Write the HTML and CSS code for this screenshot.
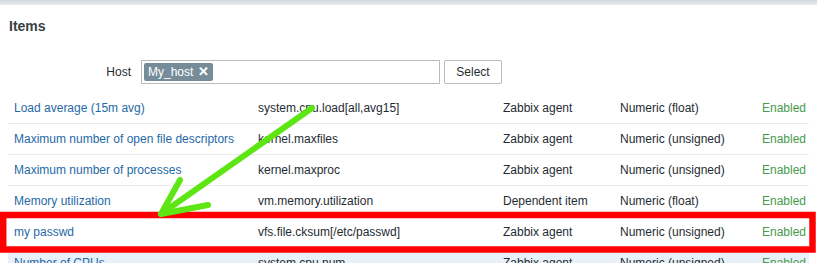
FILE: index.html
```html
<!DOCTYPE html>
<html lang="en">
<head>
  <meta charset="UTF-8">
  <title>Items</title>
  <link rel="stylesheet" href="styles.css">
</head>
<body>
  <div class="topbar"></div>
  <div class="container">
    <h1 class="title">Items</h1>
    <div class="form-row">
      <label class="form-label">Host</label>
      <div class="multiselect">
        <span class="chip">My_host <span class="chip-x">&#x2715;</span></span>
      </div>
      <button class="btn">Select</button>
    </div>
    <table class="items">
      <colgroup>
        <col style="width:244px">
        <col style="width:245px">
        <col style="width:117px">
        <col style="width:142px">
        <col>
      </colgroup>
      <tbody>
        <tr>
          <td><a href="#">Load average (15m avg)</a></td>
          <td>system.cpu.load[all,avg15]</td>
          <td>Zabbix agent</td>
          <td>Numeric (float)</td>
          <td class="status">Enabled</td>
        </tr>
        <tr>
          <td><a href="#">Maximum number of open file descriptors</a></td>
          <td>kernel.maxfiles</td>
          <td>Zabbix agent</td>
          <td>Numeric (unsigned)</td>
          <td class="status">Enabled</td>
        </tr>
        <tr>
          <td><a href="#">Maximum number of processes</a></td>
          <td>kernel.maxproc</td>
          <td>Zabbix agent</td>
          <td>Numeric (unsigned)</td>
          <td class="status">Enabled</td>
        </tr>
        <tr>
          <td><a href="#">Memory utilization</a></td>
          <td>vm.memory.utilization</td>
          <td>Dependent item</td>
          <td>Numeric (float)</td>
          <td class="status">Enabled</td>
        </tr>
        <tr>
          <td><a href="#">my passwd</a></td>
          <td>vfs.file.cksum[/etc/passwd]</td>
          <td>Zabbix agent</td>
          <td>Numeric (unsigned)</td>
          <td class="status">Enabled</td>
        </tr>
        <tr class="hover">
          <td><a href="#">Number of CPUs</a></td>
          <td>system.cpu.num</td>
          <td>Zabbix agent</td>
          <td>Numeric (unsigned)</td>
          <td class="status">Enabled</td>
        </tr>
      </tbody>
    </table>
  </div>

  <!-- annotation drawn over the screenshot -->
  <svg class="markup" width="817" height="263" viewBox="0 0 817 263">
    <rect x="3.2" y="215" width="809.3" height="34.5" fill="none" stroke="#ff0000" stroke-width="6.5"/>
    <g stroke="#5ee614" stroke-width="6" stroke-linecap="round" fill="none">
      <line x1="312" y1="108" x2="161" y2="214"/>
      <line x1="161" y1="214" x2="180" y2="180"/>
      <line x1="161" y1="214" x2="208" y2="205"/>
    </g>
  </svg>
</body>
</html>
```

FILE: styles.css
```css
body {
  font-family: "Liberation Sans", Arial, sans-serif;
  font-size: 12px;
  color: #1f2c33;
  background-color: #fff;
  margin: 0;
  padding: 0;
  overflow: hidden;
}
.topbar {
  height: 5px;
  background: linear-gradient(to bottom, #d3d7da, #e9ecee);
}
.container {
  padding: 0 8px;
}
.title {
  font-size: 14px;
  font-weight: bold;
  color: #384045;
  margin: 0;
  padding: 13px 1px 0;
  height: 42px;
  box-sizing: border-box;
}
.form-row {
  display: flex;
  align-items: center;
  gap: 4px;
  margin-top: 13px;
  height: 24px;
}
.form-label {
  width: 123px;
  text-align: right;
  margin-right: 6px;
  color: #1f2c33;
}
.multiselect {
  width: 299px;
  height: 24px;
  box-sizing: border-box;
  border: 1px solid #b8bcbf;
  display: flex;
  align-items: center;
  padding-left: 2px;
}
.chip {
  background-color: #768d99;
  color: #fff;
  height: 18px;
  line-height: 18px;
  padding: 0 4px;
  border-radius: 2px;
  white-space: nowrap;
}
.chip-x {
  font-size: 13px;
  font-weight: bold;
  margin-left: 1px;
}
.btn {
  font-family: "Liberation Sans", Arial, sans-serif;
  font-size: 12px;
  color: #1f2c33;
  background-color: #fff;
  border: 1px solid #b8bcbf;
  border-radius: 2px;
  height: 24px;
  width: 58px;
  padding: 0;
}
.items {
  width: 801px;
  table-layout: fixed;
  border-collapse: collapse;
  margin-top: 9px;
}
.items td {
  height: 30px;
  padding: 0 6px;
  border-bottom: 1px solid #ebebeb;
  white-space: nowrap;
  overflow: hidden;
}
.items a {
  color: #1f6aa5;
  text-decoration: none;
}
.items .status {
  color: #479a4c;
}
.items tr.hover td {
  background-color: #e8f0f9;
}
.markup {
  position: absolute;
  left: 0;
  top: 0;
  pointer-events: none;
}
```
